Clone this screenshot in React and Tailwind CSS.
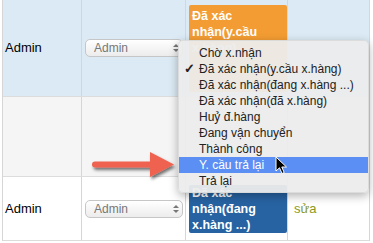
import React from "react";

const statuses = [
  "Chờ x.nhận",
  "Đã xác nhận(y.cầu x.hàng)",
  "Đã xác nhận(đang x.hàng ...)",
  "Đã xác nhận(đã x.hàng)",
  "Huỷ đ.hàng",
  "Đang vận chuyển",
  "Thành công",
  "Y. cầu trả lại",
  "Trả lại",
];

const FakeSelect = () => (
  <div className="relative w-[98px] h-[18px] rounded-[5px] border border-[#c6c6c6] bg-gradient-to-b from-white to-[#ececec] text-[12px] leading-[16px] text-[#777] pl-[8px]">
    Admin
    <svg className="absolute right-[3px] top-[3px]" width="6" height="10" viewBox="0 0 6 10">
      <path d="M0 4 L3 1 L6 4 Z" fill="#777" />
      <path d="M0 6 L3 9 L6 6 Z" fill="#777" />
    </svg>
  </div>
);

const Row = ({ bg, height, children }) => (
  <div className={`flex ${bg} ${height} border-b border-[#dcdcdc]`}>{children}</div>
);

export default function App() {
  return (
    <div
      className="relative w-[373px] h-[243px] overflow-hidden bg-white text-[13px] text-black"
      style={{ fontFamily: '"Liberation Sans", Arial, sans-serif' }}
    >
      <div className="ml-[2px] w-[368px] border-l border-r border-[#d6d6d6]">
        {/* row 1 */}
        <Row bg="bg-[#dbeaf4]" height="h-[97px]">
          <div className="w-[79px] flex items-center pl-[2px] border-r border-[#d6d6d6]">Admin</div>
          <div className="w-[103px] flex items-center pl-[3px]">
            <FakeSelect />
          </div>
          <div className="w-[103px] pl-[3px] pt-[5px] border-l border-r border-[#d6d6d6]">
            <div className="w-[98px] h-[87px] bg-[#f39c33] text-white font-bold text-[12.5px] leading-[16px] px-[3px] pt-[3px] rounded-[2px]">
              Đã xác nhận(y.cầu x.hàng)
            </div>
          </div>
          <div className="flex-1" />
        </Row>

        {/* row 2 */}
        <Row bg="bg-[#f5f5f5]" height="h-[80px]">
          <div className="w-[79px] border-r border-[#d6d6d6]" />
          <div className="w-[103px]" />
          <div className="w-[103px] border-l border-r border-[#d6d6d6]" />
          <div className="flex-1" />
        </Row>

        {/* row 3 */}
        <Row bg="bg-white" height="h-[64px]">
          <div className="w-[79px] flex items-center pl-[2px] border-r border-[#d6d6d6]">Admin</div>
          <div className="w-[103px] flex items-center pl-[3px]">
            <FakeSelect />
          </div>
          <div className="w-[103px] flex items-center pl-[3px] border-l border-r border-[#d6d6d6]">
            <div className="w-[98px] bg-[#2763a2] text-white font-bold text-[12.5px] leading-[16px] px-[3px] rounded-[2px]">
              Đã xác nhận(đang x.hàng ...)
            </div>
          </div>
          <div className="flex-1 flex items-center pl-[6px] text-[#8a9a1c]">sửa</div>
        </Row>
      </div>

      {/* dropdown menu */}
      <div className="absolute left-[178px] top-[40px] w-[191px] rounded-[5px] bg-[#ececec]/95 pt-[4px] pb-[3px] text-[12px] shadow-[0_3px_10px_rgba(0,0,0,0.3)] border border-[#d0d0d0]/60">
        {statuses.map((s, i) => (
          <div
            key={s}
            className={`relative h-[16px] leading-[16px] pl-[20px] ${
              i === 7 ? "bg-[#5b8ff3] text-white" : "text-[#222]"
            }`}
          >
            {i === 1 && (
              <span className="absolute left-[5px] top-0 text-[13px] font-bold">✓</span>
            )}
            {s}
          </div>
        ))}
      </div>

      {/* red arrow */}
      <svg className="absolute left-[88px] top-[148px]" width="94" height="36" viewBox="88 148 94 36">
        <defs>
          <filter id="sh" x="-20%" y="-40%" width="140%" height="180%">
            <feDropShadow dx="1.5" dy="2.5" stdDeviation="1.5" floodColor="#000" floodOpacity="0.55" />
          </filter>
        </defs>
        <g filter="url(#sh)">
          <line x1="95" y1="164.5" x2="153" y2="164.5" stroke="#ee6250" strokeWidth="6" strokeLinecap="round" />
          <path d="M150 152 L174 164.5 L150 177 Z" fill="#ee6250" />
        </g>
      </svg>

      {/* mouse cursor */}
      <svg className="absolute left-[275px] top-[156px]" width="14" height="20" viewBox="0 0 14 20">
        <path
          d="M1 1 L1 15 L4.5 11.8 L7 17.5 L9.2 16.5 L6.8 11 L11.5 11 Z"
          fill="#000"
          stroke="#fff"
          strokeWidth="1"
          strokeLinejoin="round"
        />
      </svg>
    </div>
  );
}
